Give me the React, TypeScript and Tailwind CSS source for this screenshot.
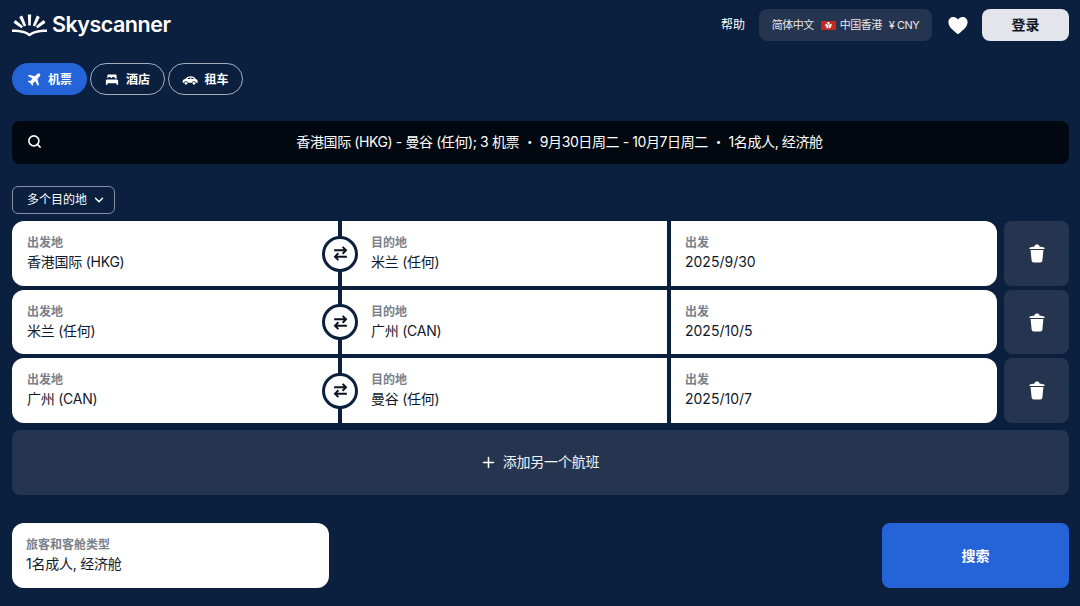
import { ChevronDown, Plus, Search } from "lucide-react";

const font = "font-['Inter','Noto_Sans_CJK_SC',sans-serif]";

function Logo() {
    return (
        <div className="flex items-center gap-[5px]">
            <svg width="35" height="23" viewBox="0 0 35 23" fill="white">
                <path d="M0 15.500c5.500 0 10 .5 13 1.700 1.800.7 3.200 1.500 4.500 2.300 1.300-.8 2.700-1.600 4.500-2.300 3-1.200 7.500-1.700 13-1.700v2.500c-5 0-8.500.3-11.500 1.200-2 .6-4 1.800-6 3.300-2-1.500-4-2.700-6-3.300C8.500 18.300 5 18 0 18z" />
                <path d="M15.800 .5h3.400l-.5 11h-2.400z" />
                <path d="M7.200 3l3-1.400 4 10-2.300 1z" />
                <path d="M27.800 3l-3-1.400-4 10 2.300 1z" />
                <path d="M1.500 8.700l1.900-2.700 7.700 6.300-1.700 1.900z" />
                <path d="M33.500 8.700l-1.900-2.700-7.700 6.300 1.700 1.900z" />
            </svg>
            <span className="text-[21.5px] font-semibold leading-none tracking-[-0.5px] text-white">Skyscanner</span>
        </div>
    );
}

function PlaneIcon() {
    return (
        <svg width="14" height="14" viewBox="0 0 24 24" fill="white">
            <path d="M22.500 1.500c-1.500-1.500-4-.8-5.500.7l-3.500 3.500L3.500 3 1.500 5l8 4.500L6 13.500l-3-.5-1.500 1.500 4.500 3 3 4.500 1.500-1.500-.5-3 4-3.500 4.500 8 2-2-2.700-10 3.500-3.500c1.500-1.500 2.200-4 .7-5.500z" />
        </svg>
    );
}

function BedIcon() {
    return (
        <svg width="14" height="14" viewBox="0 0 24 24" fill="white">
            <path d="M4 4.500C4 3 5 2.500 6.500 2.500h11c1.500 0 2.500.5 2.500 2V10c-1-.6-2-.9-3-1-.3-1.500-1.500-2-3-2-1.200 0-2 .5-2 1.500-.6.100-1.400.100-2 0C10 7.500 9.200 7 8 7 6.500 7 5.300 7.500 5 9c-.4 0-.7.200-1 .4z" />
            <path d="M1.500 13.500c0-1.500 1-2.500 3-2.500h15c2 0 3 1 3 2.500V20h-3v-2.500h-15V20h-3z" />
        </svg>
    );
}

function CarIcon() {
    return (
        <svg width="16" height="14" viewBox="0 0 24 20">
            <path fill="white" d="M1 12c0-2 1.500-3 4-3.500C7 6 9.500 4.500 13 4.500c3.500 0 6 1.500 7.500 4 1.800.4 3 1.500 3 3.500v2h-2.600a3 3 0 0 0-5.800 0H8.900a3 3 0 0 0-5.800 0H1z" />
            <path fill="#0b203e" d="M8 8.500c1.300-1.400 3-2.200 4.500-2.200v2.200zM14 6.300c1.600.1 3 .9 3.800 2.200H14z" />
            <circle fill="white" cx="6" cy="15" r="2" />
            <circle fill="white" cx="18" cy="15" r="2" />
        </svg>
    );
}

function SwapButton() {
    return (
        <div className="absolute left-[310px] top-1/2 z-10 flex h-9 w-9 -translate-y-1/2 items-center justify-center rounded-full border-[3px] border-[#0b203e] bg-white">
            <svg width="17" height="17" viewBox="0 0 16 16" fill="none" stroke="#0b1220" strokeWidth="1.800">
                <path d="M2 5h11M10 1.800 13.200 5 10 8.200" />
                <path d="M14 11H3M6 7.800 2.800 11 6 14.200" />
            </svg>
        </div>
    );
}

function TrashIcon() {
    return (
        <svg width="16" height="19" viewBox="0 0 16 19" fill="white">
            <path d="M0.500 3.800C2 3 4 2.500 5.500 2.400 5.700 1 6.700.5 8 .5s2.300.5 2.500 1.900c1.500.1 3.500.6 5 1.400v1.200H.5z" />
            <path d="M1.600 6h12.800l-1 10.500c-.2 1.300-1 2-2.200 2H4.800c-1.200 0-2-.7-2.200-2z" />
        </svg>
    );
}

function Field({ label, value, className, valueClass }: { label: string; value: string; className: string; valueClass: string }) {
    return (
        <div className={`flex flex-col justify-center bg-white ${className}`}>
            <span className="text-xs font-semibold leading-[16px] text-[#7a818c]">{label}</span>
            <span className={`mt-[2px] mb-[1px] text-sm leading-[18px] text-[#111827] ${valueClass}`}>{value}</span>
        </div>
    );
}

const legs = [
    { from: "香港国际 (HKG)", to: "米兰 (任何)", date: "2025/9/30", height: "h-[65px]" },
    { from: "米兰 (任何)", to: "广州 (CAN)", date: "2025/10/5", height: "h-[64px]" },
    { from: "广州 (CAN)", to: "曼谷 (任何)", date: "2025/10/7", height: "h-[65px]" },
];

export default function App() {
    return (
        <main className={`${font} h-[606px] overflow-hidden bg-[#0b203e] pl-3 pr-[11px] text-white`}>
            {/* Header */}
            <header className="flex h-[50px] items-center justify-between">
                <Logo />
                <div className="flex items-center">
                    <span className="text-xs">帮助</span>
                    <div className="ml-[14px] flex h-8 w-[173px] items-center justify-center gap-[4px] rounded-lg bg-[#26354f] text-[11px] tracking-[-0.5px] text-[#e5e7eb]">
                        <span>简体中文</span>
                        <span className="ml-[3px] flex h-[9px] w-[15px] items-center justify-center bg-[#c1281f] text-[7px] leading-none text-white">✿</span>
                        <span>中国香港</span>
                        <span className="ml-[3px]">¥ CNY</span>
                    </div>
                    <svg className="ml-[16px]" width="20" height="19" viewBox="0 0 24 22" fill="white">
                        <path d="M12 21.500C5 16 .5 12 .5 7 .5 3.300 3.300 .8 6.500 .8c2.300 0 4.300 1.100 5.500 3.200C13.200 1.900 15.200 .8 17.500 .8c3.200 0 6 2.500 6 6.200 0 5-4.500 9-11.500 14.500z" />
                    </svg>
                    <button className="ml-[14px] h-8 w-[87px] rounded-lg bg-[#e3e5ea] text-sm font-semibold text-[#111827]">登录</button>
                </div>
            </header>

            {/* Tabs */}
            <nav className="mt-[13px] flex gap-[3px]">
                <div className="flex h-8 w-[75px] items-center justify-center gap-[7px] rounded-full bg-[#2563d9] pt-[1px] text-xs font-semibold">
                    <PlaneIcon />
                    机票
                </div>
                <div className="flex h-8 w-[75px] items-center justify-center gap-[7px] rounded-full border border-[#a3acb9] pt-[1px] text-xs font-semibold">
                    <BedIcon />
                    酒店
                </div>
                <div className="flex h-8 w-[75px] items-center justify-center gap-[6px] rounded-full border border-[#a3acb9] pt-[1px] text-xs font-semibold">
                    <CarIcon />
                    租车
                </div>
            </nav>

            {/* Summary */}
            <div className="relative mt-[26px] flex h-[43px] items-center justify-center rounded-lg bg-[#02080f] pb-[2px] pl-[38px] text-sm tracking-[-0.4px]">
                <Search className="absolute left-[15px] top-[13px]" size={15} strokeWidth={2.500} />
                <span>香港国际 (HKG) - 曼谷 (任何); 3 机票 ・ 9月30日周二 - 10月7日周二 ・ 1名成人, 经济舱</span>
            </div>

            <div className="mt-[22px] flex h-[28px] w-[103px] items-center justify-between rounded-md border border-[#8791a1] pl-[14px] pr-[8px] text-xs">
                多个目的地
                <ChevronDown size={14} strokeWidth={2.500} />
            </div>

            {/* Legs */}
            <div className="mt-[7px] flex flex-col gap-1">
                {legs.map((leg) => (
                    <div key={leg.from} className={`flex gap-[7px] ${leg.height}`}>
                        <div className="relative flex w-[985px] gap-1 overflow-hidden rounded-xl">
                            <Field label="出发地" value={leg.from} className="w-[326px] pl-[15px]" valueClass="tracking-[-0.25px]" />
                            <Field label="目的地" value={leg.to} className="w-[325px] pl-[29px]" valueClass="tracking-[-0.25px]" />
                            <Field label="出发" value={leg.date} className="flex-1 pl-[14px]" valueClass="" />
                            <SwapButton />
                        </div>
                        <div className="flex w-[65px] items-center justify-center rounded-lg bg-[#26354f]">
                            <TrashIcon />
                        </div>
                    </div>
                ))}
            </div>

            <div className="mt-[7px] flex h-[65px] items-center justify-center gap-[6px] rounded-lg bg-[#26354f] pb-[1px] pr-[2px] text-sm tracking-[-0.2px] text-[#f3f4f6]">
                <Plus size={17} strokeWidth={2.200} color="white" />
                添加另一个航班
            </div>

            {/* Bottom */}
            <div className="mt-7 flex justify-between">
                <div className="flex h-[65px] w-[317px] flex-col justify-center rounded-xl bg-white pl-[14px]">
                    <span className="text-xs font-semibold leading-[16px] text-[#7a818c]">旅客和客舱类型</span>
                    <span className="mt-[2px] mb-[1px] text-sm leading-[18px] tracking-[-0.25px] text-[#111827]">1名成人, 经济舱</span>
                </div>
                <button className="h-[65px] w-[187px] rounded-lg bg-[#2563d9] text-sm font-semibold text-white">搜索</button>
            </div>
        </main>
    );
}
